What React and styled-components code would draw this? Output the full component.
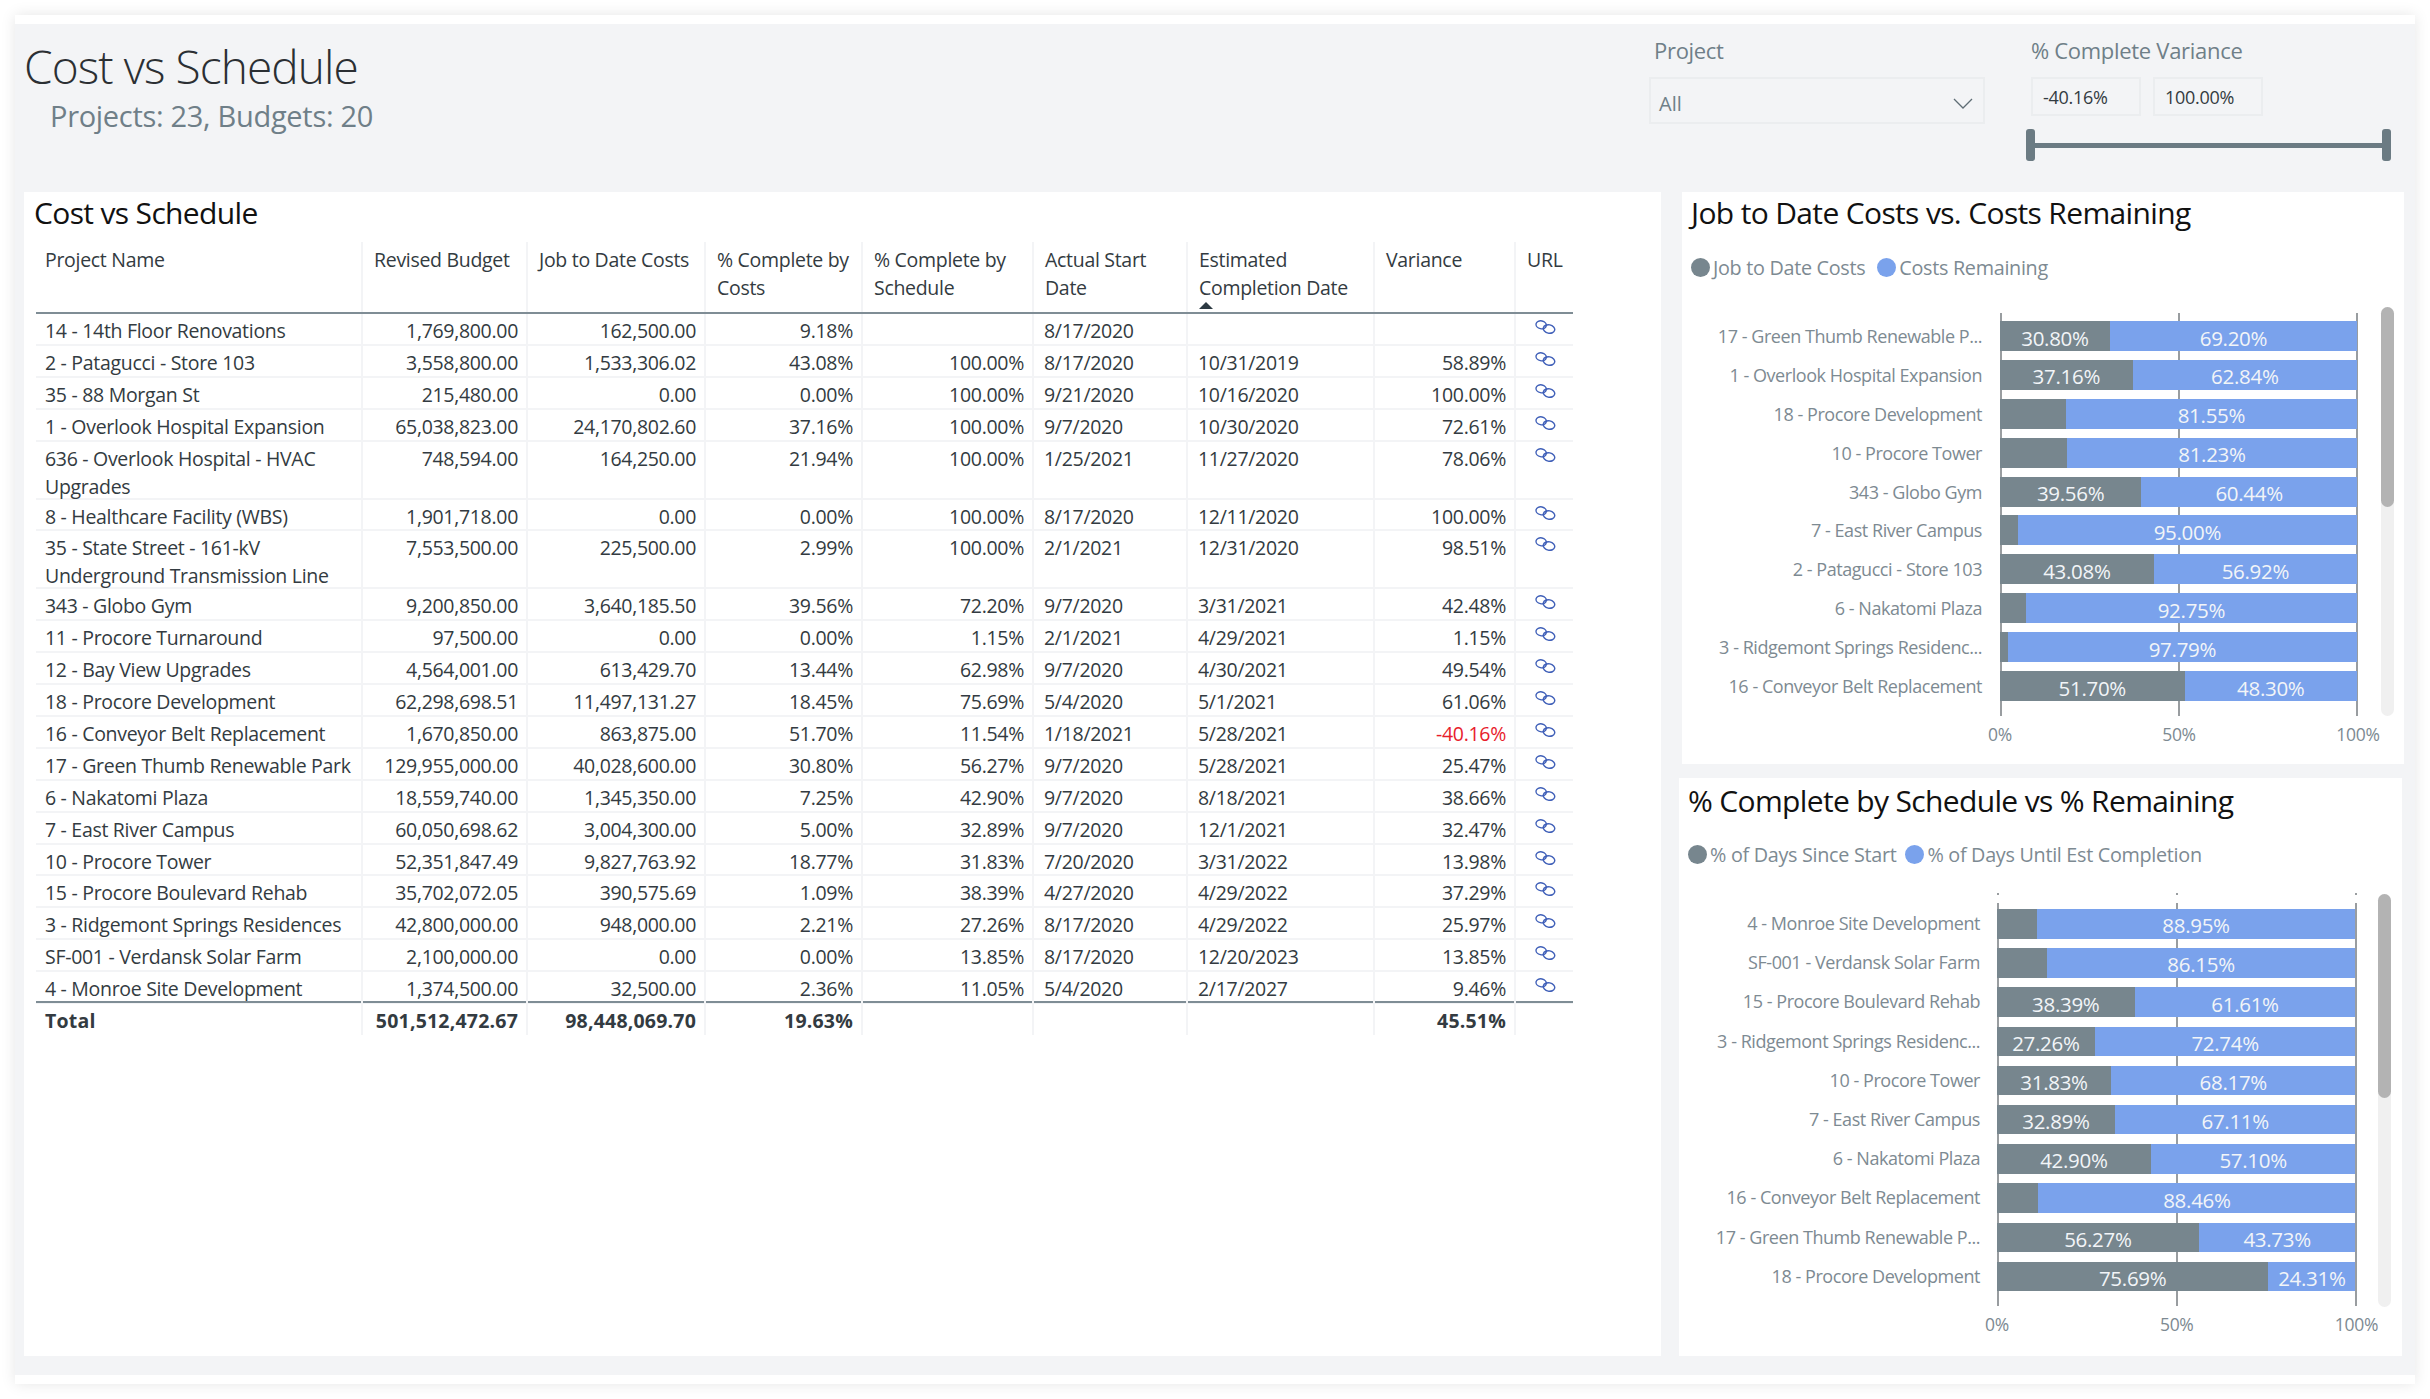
import React from "react";
import styled, { createGlobalStyle } from "styled-components";

const GlobalStyle = createGlobalStyle`
  html, body { margin: 0; padding: 0; background: #fff; }
  body { font-family: "Open Sans", "Noto Sans", sans-serif; }
`;

const COLUMNS = "327px 165px 178px 157px 171px 154px 187px 141px 57px";
const GREY = "#77868e";
const BLUE = "#7aa2ec";
const TICK = "linear-gradient(#999da0, #999da0)";

const Frame = styled.div`
  margin: 15px;
  width: 2400px;
  height: 1369px;
  box-sizing: border-box;
  background: #f3f4f6;
  border-top: 9px solid #fff;
  border-bottom: 9px solid #fff;
  box-shadow: 0 0 14px rgba(0, 0, 0, 0.1);
`;

const Header = styled.header`
  height: 168px;
  display: flex;
  box-sizing: border-box;
  padding-right: 25px;
`;

const Heading = styled.div`
  flex: 1;
  padding: 11px 0 0 9px;
`;

const PageTitle = styled.h1`
  margin: 0;
  font-size: 46px;
  line-height: 62px;
  font-weight: 350;
  letter-spacing: -0.9px;
  color: #2b2f33;
`;

const SubTitle = styled.div`
  margin: 0 0 0 26px;
  font-size: 29px;
  line-height: 38px;
  font-weight: 400;
  letter-spacing: -0.3px;
  color: #6f7f88;
`;

const Filter = styled.div`
  width: ${(p) => p.$width}px;
  padding-top: 11px;
  margin-right: ${(p) => p.$gap || 0}px;
`;

const FilterLabel = styled.div`
  font-size: 22px;
  line-height: 30px;
  letter-spacing: -0.3px;
  color: #6f7f88;
  padding-left: ${(p) => p.$indent || 0}px;
`;

const Dropdown = styled.div`
  margin-top: 12px;
  height: 47px;
  box-sizing: border-box;
  border: 2px solid #ebedef;
  display: flex;
  align-items: center;
  justify-content: space-between;
  padding: 6px 10px 0 8px;
  font-size: 20px;
  color: #6f7f88;
`;

const RangeInputs = styled.div`
  margin-top: 12px;
  display: flex;
  gap: 12px;
`;

const RangeInput = styled.div`
  width: 110px;
  height: 39px;
  box-sizing: border-box;
  border: 2px solid #ebedef;
  display: flex;
  align-items: center;
  padding-left: 10px;
  font-size: 18px;
  letter-spacing: -0.3px;
  color: #333b41;
`;

const Slider = styled.div`
  margin: 13px 0 0 -5px;
  width: 365px;
  height: 32px;
  display: flex;
  align-items: center;
  justify-content: space-between;
  position: relative;
`;

const SliderTrack = styled.div`
  position: absolute;
  left: 4px;
  right: 4px;
  top: 14px;
  height: 5px;
  background: #6b7b83;
`;

const SliderHandle = styled.div`
  width: 9px;
  height: 32px;
  border-radius: 3px;
  background: #6b7b83;
`;

const Body = styled.main`
  display: flex;
  gap: 18px;
  padding: 0 11px 0 9px;
  height: 1164px;
`;

const Panel = styled.section`
  background: #fff;
  box-sizing: border-box;
`;

const TablePanel = styled(Panel)`
  width: 1637px;
  padding: 0 0 0 10px;
`;

const ChartColumn = styled.div`
  width: 725px;
  display: flex;
  flex-direction: column;
  gap: 14px;
`;

const PanelTitle = styled.h2`
  margin: 0;
  height: 42px;
  font-size: 30px;
  line-height: 42px;
  font-weight: 400;
  letter-spacing: -0.65px;
  color: #111;
`;

const Table = styled.div`
  margin: 8px 0 0 2px;
  width: 1537px;
  font-size: 19.5px;
  letter-spacing: -0.3px;
  color: #333b41;
`;

const Row = styled.div`
  display: grid;
  grid-template-columns: ${COLUMNS};
  height: ${(p) => (p.$tall ? "58px" : "31.9px")};
`;

const HeadRow = styled(Row)`
  height: 72px;
  border-bottom: 2px solid #7f8d95;
  box-sizing: border-box;
`;

const BodyRow = styled(Row)`
  box-sizing: border-box;
  border-bottom: 2px solid #f3f4f6;
  &:last-of-type {
    border-bottom: 0;
  }
`;

const TotalRow = styled(Row)`
  margin-top: -3px;
  border-top: 2px solid #7f8d95;
  box-sizing: border-box;
  height: 33px;
  padding-bottom: 1px;
  font-weight: 700;
  letter-spacing: 0.2px;
`;

const Cell = styled.div`
  box-sizing: border-box;
  padding: ${(p) => (p.$head ? "4px 8px 0 11px" : "3px 8px 0 10px")};
  line-height: 28px;
  text-align: ${(p) => (p.$right ? "right" : "left")};
  color: ${(p) => (p.$negative ? "#e81c2c" : "inherit")};
  border-right: ${(p) => (p.$last ? "0" : "2px solid #f3f4f6")};
  position: relative;
  white-space: ${(p) => (p.$wrap ? "normal" : "nowrap")};
  &:first-child {
    padding-left: 9px;
  }
`;

const TotalCell = styled(Cell)`
  padding-top: 4px;
`;

const SortArrow = styled.span`
  position: absolute;
  left: 11px;
  bottom: 3px;
  width: 0;
  height: 0;
  border-left: 7px solid transparent;
  border-right: 7px solid transparent;
  border-bottom: 7px solid #2d3a43;
`;

const LinkGlyph = styled.svg`
  display: block;
  margin: 3px 0 0 9px;
  width: 21px;
  height: 14px;
`;

const ChartPanel = styled(Panel)`
  height: ${(p) => p.$height}px;
  padding: ${(p) => p.$top}px 0 0 9px;
  margin: ${(p) => p.$margin};
`;

const Legend = styled.div`
  margin-top: ${(p) => p.$top}px;
  height: 30px;
  display: flex;
  align-items: center;
  gap: ${(p) => p.$gap}px;
  font-size: 19.8px;
  letter-spacing: -0.3px;
  color: #7d8a92;
`;

const LegendItem = styled.div`
  display: flex;
  align-items: center;
  gap: 3px;
`;

const LegendDot = styled.span`
  width: 19px;
  height: 19px;
  border-radius: 50%;
  background: ${(p) => p.$color};
`;

const ChartGrid = styled.div`
  margin-top: ${(p) => p.$top}px;
  display: grid;
  grid-template-columns: ${(p) => p.$label}px ${(p) => p.$plot}px;
  column-gap: ${(p) => p.$gap}px;
  position: relative;
`;

const Labels = styled.div`
  padding-top: ${(p) => p.$pad}px;
  display: flex;
  flex-direction: column;
  gap: ${(p) => p.$rowGap}px;
`;

const BarLabel = styled.div`
  height: ${(p) => p.$h}px;
  line-height: ${(p) => p.$h}px;
  text-align: right;
  white-space: nowrap;
  font-size: 18px;
  letter-spacing: -0.45px;
  color: #7d8a92;
`;

const Plot = styled.div`
  position: relative;
  padding: ${(p) => p.$pad}px 1px 15px 0;
  display: flex;
  flex-direction: column;
  gap: ${(p) => p.$rowGap}px;
  background-image: ${TICK}, ${TICK}, ${TICK};
  background-size: 2px calc(100% - ${(p) => p.$lead}px);
  background-repeat: no-repeat;
  background-position: 0 100%, 50% 100%, 100% 100%;
`;

/* the small specks above the axis lines of the lower chart */
const TickSpecks = styled.div`
  position: absolute;
  top: 0;
  left: 0;
  right: 0;
  height: 2px;
  background-image: ${TICK}, ${TICK}, ${TICK};
  background-size: 2px 2px;
  background-repeat: no-repeat;
  background-position: 0 0, 50% 0, 100% 0;
`;

const Bar = styled.div`
  height: ${(p) => p.$h}px;
  display: flex;
`;

const Segment = styled.div`
  background: ${(p) => p.$color};
  display: flex;
  align-items: center;
  justify-content: center;
  padding-top: 3px;
  box-sizing: border-box;
  font-size: 20.5px;
  letter-spacing: -0.3px;
  color: #f2f5f8;
`;

const AxisSpacer = styled.div``;

const Axis = styled.div`
  margin-top: 6px;
  display: flex;
  justify-content: space-between;
`;

const AxisTick = styled.span`
  width: 0;
  display: flex;
  justify-content: center;
  white-space: nowrap;
  font-size: 17.5px;
  line-height: 24px;
  letter-spacing: -0.3px;
  color: #7d8a92;
`;

const ScrollTrack = styled.div`
  position: absolute;
  top: ${(p) => p.$top}px;
  left: ${(p) => p.$left}px;
  width: 13px;
  height: ${(p) => p.$height}px;
  border-radius: 7px;
  background: #f0f0f0;
`;

const ScrollThumb = styled.div`
  height: ${(p) => p.$height}px;
  border-radius: 7px;
  background: #b3b3b3;
`;

const ROWS = [
  ["14 - 14th Floor Renovations", "1,769,800.00", "162,500.00", "9.18%", "", "8/17/2020", "", ""],
  ["2 - Patagucci - Store 103", "3,558,800.00", "1,533,306.02", "43.08%", "100.00%", "8/17/2020", "10/31/2019", "58.89%"],
  ["35 - 88 Morgan St", "215,480.00", "0.00", "0.00%", "100.00%", "9/21/2020", "10/16/2020", "100.00%"],
  ["1 - Overlook Hospital Expansion", "65,038,823.00", "24,170,802.60", "37.16%", "100.00%", "9/7/2020", "10/30/2020", "72.61%"],
  ["636 - Overlook Hospital - HVAC Upgrades", "748,594.00", "164,250.00", "21.94%", "100.00%", "1/25/2021", "11/27/2020", "78.06%", true],
  ["8 - Healthcare Facility (WBS)", "1,901,718.00", "0.00", "0.00%", "100.00%", "8/17/2020", "12/11/2020", "100.00%"],
  ["35 - State Street - 161-kV Underground Transmission Line", "7,553,500.00", "225,500.00", "2.99%", "100.00%", "2/1/2021", "12/31/2020", "98.51%", true],
  ["343 - Globo Gym", "9,200,850.00", "3,640,185.50", "39.56%", "72.20%", "9/7/2020", "3/31/2021", "42.48%"],
  ["11 - Procore Turnaround", "97,500.00", "0.00", "0.00%", "1.15%", "2/1/2021", "4/29/2021", "1.15%"],
  ["12 - Bay View Upgrades", "4,564,001.00", "613,429.70", "13.44%", "62.98%", "9/7/2020", "4/30/2021", "49.54%"],
  ["18 - Procore Development", "62,298,698.51", "11,497,131.27", "18.45%", "75.69%", "5/4/2020", "5/1/2021", "61.06%"],
  ["16 - Conveyor Belt Replacement", "1,670,850.00", "863,875.00", "51.70%", "11.54%", "1/18/2021", "5/28/2021", "-40.16%"],
  ["17 - Green Thumb Renewable Park", "129,955,000.00", "40,028,600.00", "30.80%", "56.27%", "9/7/2020", "5/28/2021", "25.47%"],
  ["6 - Nakatomi Plaza", "18,559,740.00", "1,345,350.00", "7.25%", "42.90%", "9/7/2020", "8/18/2021", "38.66%"],
  ["7 - East River Campus", "60,050,698.62", "3,004,300.00", "5.00%", "32.89%", "9/7/2020", "12/1/2021", "32.47%"],
  ["10 - Procore Tower", "52,351,847.49", "9,827,763.92", "18.77%", "31.83%", "7/20/2020", "3/31/2022", "13.98%"],
  ["15 - Procore Boulevard Rehab", "35,702,072.05", "390,575.69", "1.09%", "38.39%", "4/27/2020", "4/29/2022", "37.29%"],
  ["3 - Ridgemont Springs Residences", "42,800,000.00", "948,000.00", "2.21%", "27.26%", "8/17/2020", "4/29/2022", "25.97%"],
  ["SF-001 - Verdansk Solar Farm", "2,100,000.00", "0.00", "0.00%", "13.85%", "8/17/2020", "12/20/2023", "13.85%"],
  ["4 - Monroe Site Development", "1,374,500.00", "32,500.00", "2.36%", "11.05%", "5/4/2020", "2/17/2027", "9.46%"],
];

const HEADINGS = [
  "Project Name",
  "Revised Budget",
  "Job to Date Costs",
  "% Complete by Costs",
  "% Complete by Schedule",
  "Actual Start Date",
  "Estimated Completion Date",
  "Variance",
  "URL",
];

const COST_BARS = [
  ["17 - Green Thumb Renewable P...", 30.8],
  ["1 - Overlook Hospital Expansion", 37.16],
  ["18 - Procore Development", 18.45],
  ["10 - Procore Tower", 18.77],
  ["343 - Globo Gym", 39.56],
  ["7 - East River Campus", 5.0],
  ["2 - Patagucci - Store 103", 43.08],
  ["6 - Nakatomi Plaza", 7.25],
  ["3 - Ridgemont Springs Residenc...", 2.21],
  ["16 - Conveyor Belt Replacement", 51.7],
];

const SCHEDULE_BARS = [
  ["4 - Monroe Site Development", 11.05],
  ["SF-001 - Verdansk Solar Farm", 13.85],
  ["15 - Procore Boulevard Rehab", 38.39],
  ["3 - Ridgemont Springs Residenc...", 27.26],
  ["10 - Procore Tower", 31.83],
  ["7 - East River Campus", 32.89],
  ["6 - Nakatomi Plaza", 42.9],
  ["16 - Conveyor Belt Replacement", 11.54],
  ["17 - Green Thumb Renewable P...", 56.27],
  ["18 - Procore Development", 75.69],
];

const LinkIcon = () => (
  <LinkGlyph viewBox="0 0 21 14" fill="none" stroke="#3f5fb8" strokeWidth="1.4">
    <ellipse cx="6.2" cy="4.8" rx="5.2" ry="3.9" transform="rotate(12 6.2 4.8)" />
    <ellipse cx="14" cy="9" rx="5.8" ry="4.2" transform="rotate(12 14 9)" />
  </LinkGlyph>
);

const Chevron = () => (
  <svg width="20" height="11" viewBox="0 0 20 11" fill="none" stroke="#5f6d75" strokeWidth="1.3">
    <path d="M1 1l9 9 9-9" />
  </svg>
);

const BarChart = ({ title, legend, bars, cfg }) => (
  <ChartPanel $height={cfg.height} $top={cfg.top} $margin={cfg.margin}>
    <PanelTitle>{title}</PanelTitle>
    <Legend $top={cfg.legendTop} $gap={cfg.legendGap}>
      <LegendItem>
        <LegendDot $color={GREY} />
        {legend[0]}
      </LegendItem>
      <LegendItem>
        <LegendDot $color={BLUE} />
        {legend[1]}
      </LegendItem>
    </Legend>
    <ChartGrid $top={cfg.plotTop} $label={cfg.label} $plot={cfg.plot} $gap={cfg.gap}>
      <Labels $pad={cfg.pad} $rowGap={cfg.rowGap}>
        {bars.map(([name]) => (
          <BarLabel key={name} $h={cfg.bar}>
            {name}
          </BarLabel>
        ))}
      </Labels>
      <Plot $pad={cfg.pad} $rowGap={cfg.rowGap} $lead={cfg.lead}>
        {cfg.lead > 0 && <TickSpecks />}
        {bars.map(([name, value]) => (
          <Bar key={name} $h={cfg.bar}>
            <Segment $color={GREY} style={{ width: `${value}%` }}>
              {value >= 20 ? `${value.toFixed(2)}%` : ""}
            </Segment>
            <Segment $color={BLUE} style={{ width: `${100 - value}%` }}>
              {(100 - value).toFixed(2)}%
            </Segment>
          </Bar>
        ))}
      </Plot>
      <AxisSpacer />
      <Axis>
        <AxisTick>0%</AxisTick>
        <AxisTick>50%</AxisTick>
        <AxisTick>100%</AxisTick>
      </Axis>
      <ScrollTrack $top={cfg.scrollTop} $left={cfg.scrollLeft} $height={cfg.scrollHeight}>
        <ScrollThumb $height={cfg.thumb} />
      </ScrollTrack>
    </ChartGrid>
  </ChartPanel>
);

const COST_CFG = {
  height: 572,
  top: 0,
  margin: "0 0 0 3px",
  legendTop: 18,
  legendGap: 12,
  plotTop: 31,
  label: 291,
  plot: 358,
  gap: 18,
  pad: 8,
  lead: 0,
  bar: 30,
  rowGap: 8.9,
  scrollTop: -6,
  scrollLeft: 690,
  scrollHeight: 409,
  thumb: 200,
};

const SCHEDULE_CFG = {
  height: 578,
  top: 2,
  margin: "0 2px 0 0",
  legendTop: 17,
  legendGap: 9,
  plotTop: 24,
  label: 292,
  plot: 359.5,
  gap: 17,
  pad: 16,
  lead: 10,
  bar: 29.5,
  rowGap: 9.7,
  scrollTop: 1,
  scrollLeft: 690,
  scrollHeight: 413,
  thumb: 204,
};

export default function App() {
  return (
    <>
      <GlobalStyle />
      <Frame>
        <Header>
          <Heading>
            <PageTitle>Cost vs Schedule</PageTitle>
            <SubTitle>Projects: 23, Budgets: 20</SubTitle>
          </Heading>
          <Filter $width={336} $gap={46}>
            <FilterLabel $indent={5}>Project</FilterLabel>
            <Dropdown>
              All
              <Chevron />
            </Dropdown>
          </Filter>
          <Filter $width={359}>
            <FilterLabel>% Complete Variance</FilterLabel>
            <RangeInputs>
              <RangeInput>-40.16%</RangeInput>
              <RangeInput>100.00%</RangeInput>
            </RangeInputs>
            <Slider>
              <SliderTrack />
              <SliderHandle />
              <SliderHandle />
            </Slider>
          </Filter>
        </Header>
        <Body>
          <TablePanel>
            <PanelTitle>Cost vs Schedule</PanelTitle>
            <Table>
              <HeadRow>
                {HEADINGS.map((h, i) => (
                  <Cell key={h} $head $wrap $last={i === 8}>
                    {h}
                    {i === 6 && <SortArrow />}
                  </Cell>
                ))}
              </HeadRow>
              {ROWS.map((r) => (
                <BodyRow key={r[0]} $tall={r[8]}>
                  <Cell $wrap={r[8]}>{r[0]}</Cell>
                  <Cell $right>{r[1]}</Cell>
                  <Cell $right>{r[2]}</Cell>
                  <Cell $right>{r[3]}</Cell>
                  <Cell $right>{r[4]}</Cell>
                  <Cell>{r[5]}</Cell>
                  <Cell>{r[6]}</Cell>
                  <Cell $right $negative={r[7].startsWith("-")}>
                    {r[7]}
                  </Cell>
                  <Cell $last>
                    <LinkIcon />
                  </Cell>
                </BodyRow>
              ))}
              <TotalRow>
                <TotalCell>Total</TotalCell>
                <TotalCell $right>501,512,472.67</TotalCell>
                <TotalCell $right>98,448,069.70</TotalCell>
                <TotalCell $right>19.63%</TotalCell>
                <TotalCell />
                <TotalCell />
                <TotalCell />
                <TotalCell $right>45.51%</TotalCell>
                <TotalCell $last />
              </TotalRow>
            </Table>
          </TablePanel>
          <ChartColumn>
            <BarChart
              title="Job to Date Costs vs. Costs Remaining"
              legend={["Job to Date Costs", "Costs Remaining"]}
              bars={COST_BARS}
              cfg={COST_CFG}
            />
            <BarChart
              title="% Complete by Schedule vs % Remaining"
              legend={["% of Days Since Start", "% of Days Until Est Completion"]}
              bars={SCHEDULE_BARS}
              cfg={SCHEDULE_CFG}
            />
          </ChartColumn>
        </Body>
      </Frame>
    </>
  );
}
